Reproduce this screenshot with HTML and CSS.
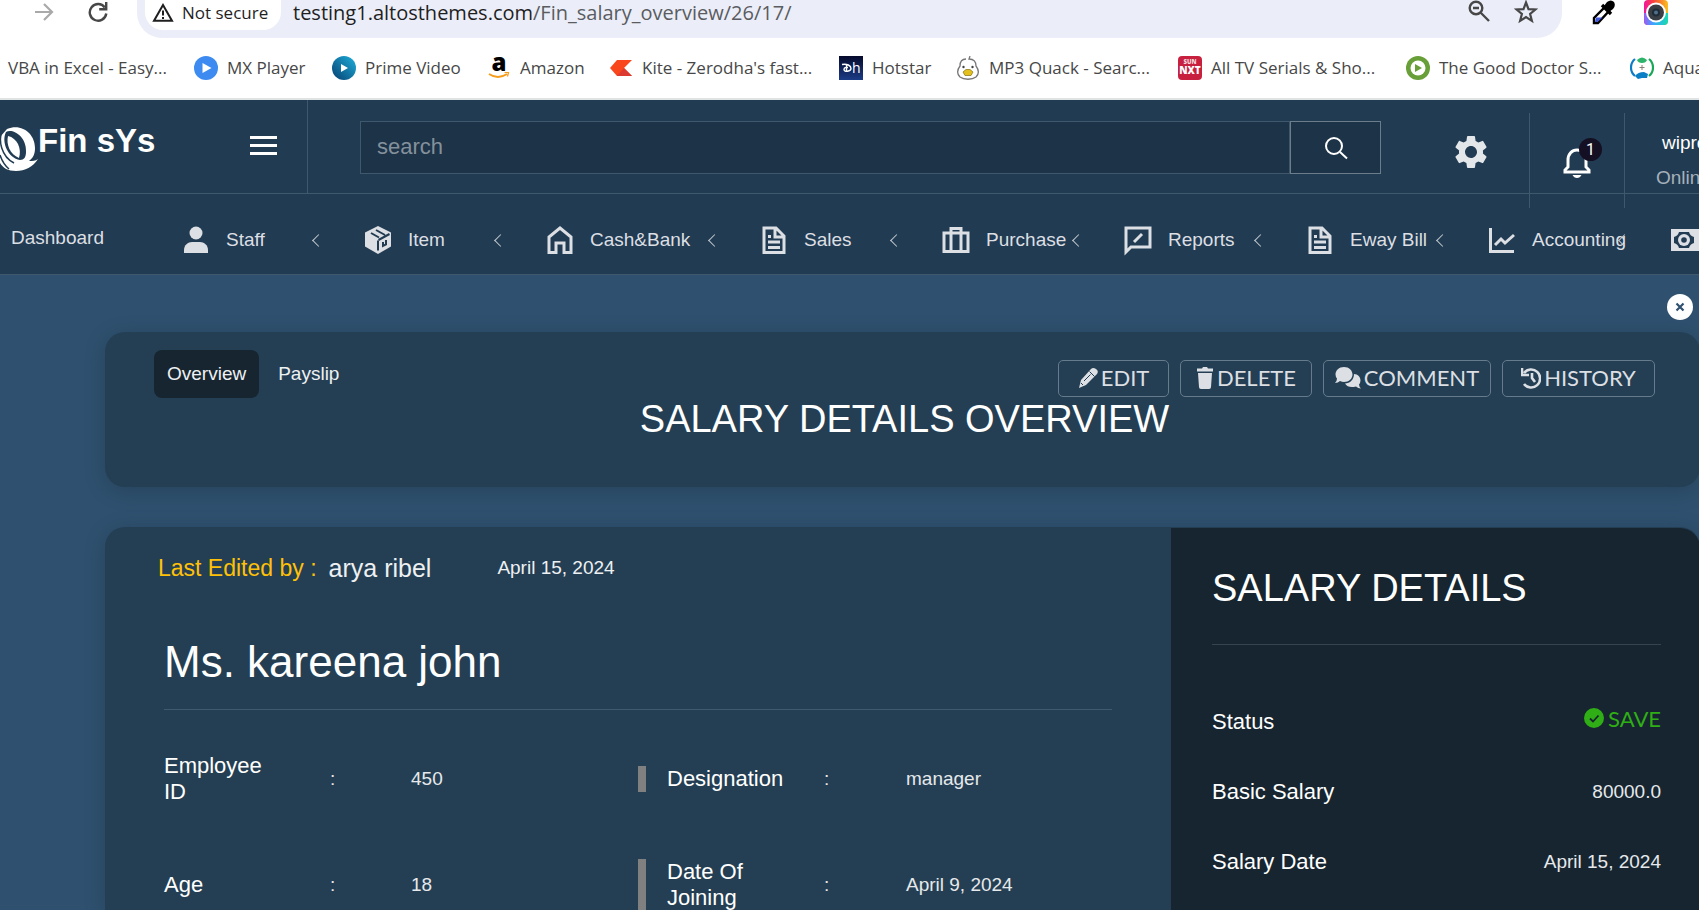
FILE: index.html
```html
<!DOCTYPE html>
<html lang="en">
<head>
<meta charset="utf-8">
<title>Salary Details Overview</title>
<link rel="stylesheet" href="styles.css">
</head>
<body>
<div class="browser">
  <div class="toolbar">
    <button class="tool forward" aria-label="Forward"><svg width="20" height="20" viewBox="0 0 20 20" fill="none" stroke="#a9a9a9" stroke-width="2.2"><path d="M1 10h16M10 2l8 8-8 8"/></svg></button>
    <button class="tool" aria-label="Reload"><svg width="20" height="20" viewBox="0 0 20 20" fill="none" stroke="#474747" stroke-width="2.4"><path d="M16.800 5.500A8.300 8.300 0 1 0 18.300 11.500"/><path d="M18.200 0v7.200h-7" /></svg></button>
    <div class="omnibox">
      <span class="chip"><svg width="22" height="19" viewBox="0 0 22 19" fill="none" stroke="#1f1f1f" stroke-width="2"><path d="M11 2L2 17.800h18z"/><path d="M11 7.500v5M11 14v2"/></svg>Not secure</span>
      <span class="url">testing1.altosthemes.com<span class="path">/Fin_salary_overview/26/17/</span></span>
      <button class="tool" aria-label="Zoom"><svg width="22" height="22" viewBox="0 0 22 22" fill="none" stroke="#474747" stroke-width="2.400"><circle cx="8" cy="8" r="6.300"/><path d="M12.500 12.500l8.500 8.500M5 8h6"/></svg></button>
      <button class="tool" aria-label="Bookmark"><svg width="24" height="24" viewBox="0 0 24 24" fill="none" stroke="#474747" stroke-width="2.200"><path d="M12 2.500l2.500 6.600 7 .4-5.400 4.500 1.800 6.900-5.900-3.800-5.900 3.800 1.800-6.900L2.500 9.500l7-.4z"/></svg></button>
    </div>
    <svg width="24" height="26" viewBox="0 0 24 26"><path d="M3 23v-5L14 7l4 4L7 23z" fill="#fff" stroke="#000" stroke-width="2.400"/><path d="M5 17.500h6.500L6.500 22H4z" fill="#4157d8"/><path d="M11 5l9 9" stroke="#000" stroke-width="3.400"/><path d="M13 6l3-4q4-3 7 0 2 4-1 7l-4 3z"/></svg>
    <svg class="camera" width="24" height="25" viewBox="0 0 24 25"><defs><linearGradient id="rb" x1="0" y1="0" x2="1" y2="0"><stop offset="0" stop-color="#f213a0"/><stop offset=".4" stop-color="#f8453a"/><stop offset="1" stop-color="#f9c01e"/></linearGradient><linearGradient id="rb2" x1="0" y1="0" x2="1" y2="0"><stop offset="0" stop-color="#9a5cf0"/><stop offset=".4" stop-color="#3ba6ff"/><stop offset="1" stop-color="#17dcb0"/></linearGradient></defs><rect width="24" height="25" rx="4" fill="url(#rb)"/><path d="M0 13h24v8q0 4-4 4H4q-4 0-4-4z" fill="url(#rb2)"/><circle cx="12" cy="12.500" r="10" fill="#fff"/><circle cx="12" cy="12.500" r="8" fill="#3a3f45"/><circle cx="12" cy="12.500" r="4" fill="#1f2c38"/><circle cx="12" cy="12.500" r="2" fill="#50708a"/></svg>
  </div>
  <nav class="bookmarks" aria-label="Bookmarks">
    <a href="#">VBA in Excel - Easy...</a>
    <a href="#"><svg width="24" height="24" viewBox="0 0 24 24"><circle cx="12" cy="12" r="12" fill="#3d8bf0"/><path d="M8.500 7l9 5-9 5z" fill="#fff"/></svg>MX Player</a>
    <a href="#"><svg width="24" height="24" viewBox="0 0 24 24"><defs><linearGradient id="pv" x1="1" y1="0" x2="0" y2="1"><stop offset="0" stop-color="#1fb0dc"/><stop offset="1" stop-color="#053f70"/></linearGradient></defs><circle cx="12" cy="12" r="12" fill="url(#pv)"/><path d="M9 8l7 4-7 4z" fill="#fff"/></svg>Prime Video</a>
    <a href="#"><svg width="24" height="24" viewBox="0 0 24 24"><text x="4.500" y="15" font-family="Open Sans" font-weight="800" font-size="24">a</text><path d="M2 18q9 6 18 0" fill="none" stroke="#f59c1a" stroke-width="2"/><path d="M17.500 16.500h4l-1 4" fill="none" stroke="#f59c1a" stroke-width="1.200"/></svg>Amazon</a>
    <a href="#"><svg width="24" height="24" viewBox="0 0 24 24"><path d="M8 4h15l-8 8 8 8H8l-7-8z" fill="#f9461c"/><path d="M15 12l8 8H8z" fill="#dc3a31"/></svg>Kite - Zerodha's fast...</a>
    <a href="#"><svg width="24" height="24" viewBox="0 0 24 24"><defs><linearGradient id="hs" x1="0" y1="0" x2="0" y2="1"><stop offset="0" stop-color="#060a2c"/><stop offset="1" stop-color="#1b3c86"/></linearGradient></defs><rect width="24" height="24" fill="url(#hs)"/><path d="M3 8.500c5-1 9 1 9 4s-7 4-7 1 4-2 4-2M7.500 9v7" fill="none" stroke="#fff" stroke-width="1.400"/><text x="13" y="17" font-family="Open Sans" font-size="14" fill="#fff">h</text></svg>Hotstar</a>
    <a href="#"><svg width="24" height="24" viewBox="0 0 24 24"><path d="M10 3c-5 0-6 4-6 7-3 4-3 8 0 11 4 3 12 3 16 0 3-3 3-7 0-11 0-4-2-7-7-7l1-3" fill="#fff" stroke="#777" stroke-width="1.300"/><circle cx="7.500" cy="11" r="1.200" fill="#444"/><circle cx="16.500" cy="11" r="1.200" fill="#444"/><path d="M7 16l3-2.500h4l3 2.500-2 3.500H9z" fill="#e3c01d" stroke="#85710f" stroke-width=".7"/></svg>MP3 Quack - Searc...</a>
    <a href="#"><svg width="24" height="24" viewBox="0 0 24 24"><rect width="24" height="24" rx="4" fill="#c8203f"/><text x="12" y="8" text-anchor="middle" font-family="Open Sans" font-weight="800" font-size="6" fill="#f4d5da">SUN</text><text x="12" y="18" text-anchor="middle" font-family="Open Sans" font-weight="800" font-size="10" fill="#fff">NXT</text></svg>All TV Serials &amp; Sho...</a>
    <a href="#"><svg width="24" height="24" viewBox="0 0 24 24"><circle cx="12" cy="12" r="12" fill="#689f38"/><circle cx="12" cy="12" r="7.500" fill="#fff"/><path d="M9 8l7 4-7 4z" fill="#689f38"/></svg>The Good Doctor S...</a>
    <a href="#"><svg width="24" height="24" viewBox="0 0 24 24" fill="none"><path d="M5 3a11 11 0 0 0 0 17" stroke="#0b7cc8" stroke-width="2.200"/><path d="M19 3a11 11 0 0 1 0 17" stroke="#18a758" stroke-width="2.200"/><path d="M7 4q5-5 10 0-1 3-5 3T7 4z" fill="#2db36a"/><path d="M5 20q3-4 9-4l4 2-1 4h-5l-4 1z" fill="#0a7fc6"/><path d="M12 9v5M9.500 11.500h5" stroke="#8a7f78"/></svg>Aqua</a>
  </nav>
</div>

<header class="header">
  <div class="brand">
    <svg class="logo" width="38" height="46" viewBox="0 0 38 46"><path d="M7 4C22-2 35 9 35 23c0 6-2 10-6 13 4 0 6 0 9-2-5 8-13 12-22 12C8 46 3 43 0 38V12z" fill="#fff"/><path d="M6 7C12 3 27 11 26 27c0 5-2 8-6 8C8 33 1 17 6 7z" fill="#213b52"/><path d="M8 11c9 2 14 12 11 22C10 29 6 20 8 11z" fill="#fff"/><path d="M3 2C-3 16 2 32 14 38M0 30q3 9 9 14" fill="none" stroke="#213b52" stroke-width="1.500"/><path d="M0 12q0-6 3-12H0z" fill="#213b52"/></svg>
    <span class="brand-name">Fin sYs</span>
    <button class="menu" aria-label="Toggle menu"><i></i><i></i><i></i></button>
  </div>
  <form class="search">
    <input type="text" placeholder="search" aria-label="search">
    <button type="button" aria-label="Submit search"><svg width="24" height="24" viewBox="0 0 24 24" fill="none" stroke="#fff" stroke-width="2"><circle cx="10" cy="10" r="8"/><path d="M16 16l7 6.500"/></svg></button>
  </form>
  <button class="gear" aria-label="Settings"><svg width="40" height="40" viewBox="0 0 24 24" fill="#e3e7ea"><path d="M19.140 12.940c.04-.3.060-.61.060-.94 0-.32-.02-.64-.07-.94l2.030-1.580a.49.49 0 0 0 .12-.61l-1.920-3.320a.488.488 0 0 0-.59-.22l-2.390.96c-.5-.38-1.030-.7-1.620-.94l-.36-2.540a.484.484 0 0 0-.48-.41h-3.840c-.24 0-.43.17-.47.41l-.36 2.540c-.59.24-1.130.57-1.620.94l-2.390-.96c-.22-.08-.47 0-.59.220L2.740 8.870c-.12.21-.08.47.12.61l2.030 1.580c-.05.3-.09.63-.09.94s.02.64.07.94l-2.030 1.580a.49.49 0 0 0-.12.610l1.920 3.320c.12.22.37.29.59.22l2.390-.96c.5.38 1.030.7 1.620.94l.36 2.540c.05.24.24.41.48.41h3.840c.24 0 .44-.17.47-.41l.36-2.540c.59-.24 1.130-.56 1.620-.94l2.390.96c.22.08.47 0 .59-.22l1.920-3.320c.12-.22.07-.47-.12-.61l-2.010-1.580zM12 15.600A3.610 3.610 0 0 1 8.400 12c0-1.980 1.620-3.600 3.600-3.600s3.600 1.620 3.600 3.600-1.620 3.600-3.600 3.600z"/></svg></button>
  <div class="alerts">
    <button class="bell" aria-label="Notifications"><svg width="28" height="30" viewBox="0 0 28 30" fill="none" stroke="#fff"><path d="M2 24v-2l3-3v-7c0-6 4-10 9-10s9 4 9 10v7l3 3v2z" stroke-width="3"/><path d="M9.500 27h9q-1.500 3-4.500 3t-4.500-3z" fill="#fff" stroke="none"/></svg><span class="badge">1</span></button>
  </div>
  <div class="user"><strong>wipro</strong><span>Online</span></div>
</header>

<nav class="mainnav" aria-label="Main">
  <a class="dash" href="#">Dashboard</a>
  <a class="item" href="#"><svg viewBox="0 0 28 28"><circle cx="14" cy="7" r="6.500"/><path d="M2 27v-3c0-5 4-8 8-8h8c4 0 8 3 8 8v3z"/></svg>Staff<i></i></a>
  <a class="item" href="#"><svg viewBox="0 0 28 28"><path d="M14 0l13 6.500v14L14 28 1 20.500v-14z"/><path class="cut" d="M14 14.500v10M14.500 14l11-6M7 7l8 4.500M12 4l9 5M19 16v4l3-1.500V14"/></svg>Item<i></i></a>
  <a class="item wide" href="#"><svg class="line" viewBox="0 0 28 28"><path d="M3 26.500V11L14 2l11 9v15.500h-7V17h-8v9.500z"/></svg>Cash&amp;Bank<i></i></a>
  <a class="item" href="#"><svg class="line" viewBox="0 0 28 28"><path d="M4 2h12l8 8v16.500H4zM15 2v9h9M8 16h12M8 21.500h12M8 10.500h3"/></svg>Sales<i></i></a>
  <a class="item" href="#"><svg class="line" viewBox="0 0 28 28"><path d="M2 7h24v18.500H2zM9 25V2.500h10V25"/></svg>Purchase<i></i></a>
  <a class="item" href="#"><svg class="line" viewBox="0 0 28 28"><path d="M2 2h24v19H7l-5 5z"/><path d="M10 16l8-8"/></svg>Reports<i></i></a>
  <a class="item" href="#"><svg class="line" viewBox="0 0 28 28"><path d="M4 2h12l8 8v16.500H4zM15 2v9h9M8 16h12M8 21.500h12M8 10.500h3"/></svg>Eway Bill<i></i></a>
  <a class="item" href="#"><svg class="line" viewBox="0 0 28 28"><path d="M2.500 2v23.500H26M7 19l6-6 4 4 9-8"/></svg>Accounting<i></i></a>
  <a class="item" href="#"><svg viewBox="0 0 28 28"><path d="M1 3h30v22H1z"/><path class="hole" d="M9 6h10q1 4 5 5v6q-4 1-5 5H9q-1-4-5-5v-6q4-1 5-5z"/><circle cx="14" cy="14" r="6"/><circle class="hole" cx="14" cy="14" r="2.800"/></svg></a>
</nav>

<main class="main">
  <button class="close" aria-label="Close"><svg width="12" height="12" viewBox="0 0 12 12" stroke="#2f516f" stroke-width="2.200"><path d="M2.500 2.500l7 7M9.500 2.500l-7 7"/></svg></button>
  <section class="card top">
    <div class="bar">
      <div class="tabs"><button class="tab active">Overview</button><button class="tab">Payslip</button></div>
      <div class="actions">
        <button><svg width="20" height="22" viewBox="0 0 20 22"><path d="M1 21l2-8L13 2q2-2 5 0t1 5L8 18z"/><path class="cut thin" d="M11.500 4.500l5 5M6 14l6.500-6.500M3 16l2 2"/></svg>EDIT</button>
        <button><svg width="18" height="22" viewBox="0 0 18 22"><path d="M1 1.500h5L7 0h4l1 1.500h5v3H1zM2 6h14l-1 14q0 2-2 2H5q-2 0-2-2z"/></svg>DELETE</button>
        <button><svg width="26" height="22" viewBox="0 0 26 22"><path d="M9 0c5 0 8.500 3.500 8.500 7.500S14 15 9 15q-2 0-4-1-2 2-5 2 2-2 2-4.500Q.5 9.500.5 7.500C.5 3.500 4 0 9 0z"/><path d="M19 7c4 0 6.500 3 6.500 6.500q0 2-1.500 4 0 2 2 4-3 0-5-2-8 2-11-3c5 0 9-4 9-9.500z"/></svg>COMMENT</button>
        <button><svg class="line" width="20" height="22" viewBox="0 0 20 22"><path d="M3 6a9 9 0 1 1 0 11M1 1v7h7M11 6v5l3 4"/></svg>HISTORY</button>
      </div>
    </div>
    <h1>SALARY DETAILS OVERVIEW</h1>
  </section>

  <section class="card detail">
    <div class="person">
      <div class="edited"><span class="by">Last Edited by :</span><span class="who">arya ribel</span><time>April 15, 2024</time></div>
      <div class="info">
        <h2>Ms. kareena john</h2>
        <hr>
        <div class="row">
          <dl class="pair"><dt>Employee ID</dt><dd>:</dd><dd>450</dd></dl>
          <dl class="pair right"><dt>Designation</dt><dd>:</dd><dd>manager</dd></dl>
        </div>
        <div class="row">
          <dl class="pair"><dt>Age</dt><dd>:</dd><dd>18</dd></dl>
          <dl class="pair right"><dt>Date Of Joining</dt><dd>:</dd><dd>April 9, 2024</dd></dl>
        </div>
      </div>
    </div>
    <aside class="salary">
      <h2>SALARY DETAILS</h2>
      <hr>
      <div class="line-item"><span>Status</span><b class="save"><svg width="20" height="20" viewBox="0 0 20 20"><circle cx="10" cy="10" r="10" fill="#2fae15"/><path d="M6 10.500l3 3 5.500-6" fill="none" stroke="#162530" stroke-width="1.800"/></svg>SAVE</b></div>
      <div class="line-item"><span>Basic Salary</span><em>80000.0</em></div>
      <div class="line-item"><span>Salary Date</span><em>April 15, 2024</em></div>
    </aside>
  </section>
</main>
</body>
</html>
```
FILE: styles.css
```css
* { box-sizing: border-box; }
body {
  margin: 0;
  height: 100vh;
  overflow: hidden;
  display: flex;
  flex-direction: column;
  background: #2f516f;
  color: #fff;
  font-family: "Liberation Sans", Arial, sans-serif;
  font-size: 19px;
}
button { font: inherit; color: inherit; background: none; border: 0; padding: 0; }
a { color: inherit; text-decoration: none; }
svg { flex: none; display: block; }
h1, h2, dl, dt, dd { margin: 0; font-weight: 400; }
hr { margin: 0; border: 0; border-top: 1px solid #3f5a70; }

/* browser chrome */
.browser {
  flex: none;
  height: 100px;
  background: #fff;
  border-bottom: 2px solid #dfe3e3;
  font-family: "Open Sans", sans-serif;
  overflow: hidden;
}
.toolbar { display: flex; align-items: flex-start; height: 38px; padding-left: 34px; gap: 29px; }
.toolbar > .tool { padding-top: 2px; }
.toolbar > .forward { margin-right: 5px; }
.omnibox {
  flex: 1;
  display: flex;
  align-items: flex-start;
  height: 38px;
  padding: 0 24px 0 8px;
  border-radius: 0 0 25px 25px;
  background: #ebeef8;
  color: #1f1f1f;
}
.chip {
  display: flex;
  align-items: center;
  gap: 8px;
  width: 136px;
  height: 30px;
  padding: 0 0 5px 7px;
  border-radius: 0 0 18px 18px;
  background: #fff;
  font-size: 17px;
  font-weight: 500;
  white-space: nowrap;
}
.url { flex: 1; padding-left: 12px; font-size: 20px; line-height: 25px; }
.path { color: #5a5c61; }
.omnibox .tool { margin-left: 24px; }
.camera { margin: 0 44px 0 0; }
.toolbar { padding-right: 0; margin-right: -13px; }
.bookmarks {
  display: grid;
  grid-template-columns: 186px 138px 155px 122px 230px 117px 222px 228px 224px 100px;
  padding: 18px 0 0 8px;
  color: #474747;
  font-size: 17px;
  line-height: 24px;
  white-space: nowrap;
}
.bookmarks a { display: flex; gap: 9px; }

/* header */
.header { flex: none; display: flex; height: 94px; background: #213b52; border-bottom: 1px solid #40586c; }
.brand { display: flex; width: 308px; border-right: 1px solid #40586c; }
.logo { margin-top: 25px; }
.brand-name { flex: 1; padding-top: 23px; font-size: 33px; line-height: 36px; font-weight: 700; }
.menu { display: flex; flex-direction: column; gap: 5px; margin: 36px 30px 0 0; height: 20px; }
.menu i { width: 27px; height: 3px; background: #fff; }
.search { flex: 1; display: flex; margin: 21px 0 0 52px; height: 53px; }
.search input {
  flex: 1;
  min-width: 0;
  padding: 0 16px 2px;
  border: 1px solid #40586c;
  background: #1d3347;
  color: #fff;
  font: inherit;
  font-size: 22px;
  border-radius: 0;
}
.search input::placeholder { color: #84919c; opacity: 1; }
.search button { width: 91px; border: 1px solid #6b7d8b; background: #1d3347; display: grid; place-items: center; }
.gear { width: 148px; padding: 10px 0 0 32px; display: grid; place-items: center; }
.alerts { width: 96px; margin: 13px 0 -15px; border: solid #40586c; border-width: 0 1px; display: grid; place-items: center; z-index: 1; }
.bell { position: relative; padding-top: 4px; }
.badge {
  position: absolute;
  top: -6px;
  left: 16px;
  width: 23px;
  height: 23px;
  border-radius: 50%;
  background: #140f22;
  color: #fff;
  font: 16px/23px Roboto, sans-serif;
}
.user { width: 74px; padding: 31px 0 0 31px; overflow: hidden; white-space: nowrap; font-size: 19px; }
.user strong { display: block; padding-left: 6px; line-height: 24px; font-weight: 400; }
.user span { display: block; margin-top: 11px; line-height: 24px; color: #a6b1ba; }

/* navigation */
.mainnav {
  flex: none;
  display: flex;
  height: 81px;
  gap: 45px;
  padding-left: 11px;
  overflow: hidden;
  background: #213b52;
  border-bottom: 1px solid #40586c;
  color: #dcdfe3;
  line-height: 22px;
  white-space: nowrap;
}
.dash { flex: none; width: 126px; padding-top: 33px; }
.item { position: relative; flex: none; display: flex; align-items: center; gap: 16px; width: 137px; height: 92px; }
.item.wide { width: 169px; }
.item svg { width: 28px; height: 28px; fill: #dcdfe3; overflow: visible; }
.item svg.line { fill: none; stroke: #dcdfe3; stroke-width: 3; }
.item svg .cut, .cut { fill: none; stroke: #213b52; stroke-width: 2; }
.item svg .hole { fill: #213b52; }
.actions .thin { stroke-width: 1; }
.item i {
  position: absolute;
  right: -4px;
  top: 42px;
  width: 9px;
  height: 9px;
  border: solid #c4cad0;
  border-width: 0 0 1px 1px;
  transform: rotate(45deg);
}

/* content */
.main { flex: 1; min-height: 0; display: flex; flex-direction: column; margin-right: -1px; padding-left: 105px; }
.close { align-self: flex-end; flex: none; width: 26px; height: 26px; margin: 19px 7px 12px 0; border-radius: 50%; background: #fff; display: grid; place-items: center; }
.card { background: #243f54; border-radius: 20px; box-shadow: 0 4px 20px rgba(20, 35, 50, .3); }
.top { flex: none; height: 155px; padding: 18px 45px 0 49px; }
.bar { display: flex; justify-content: space-between; height: 48px; }
.tabs { display: flex; gap: 6px; }
.tab { padding: 0 13px; border-radius: 8px; color: #eef0f2; }
.tab.active { background: #162530; }
.actions {
  display: grid;
  grid-template-columns: 111px 132px 168px 153px;
  gap: 11px;
  height: 37px;
  margin-top: 10px;
  font-family: Lato, sans-serif;
  font-size: 22px;
  color: #dcdfe3;
}
.actions button { display: flex; align-items: center; justify-content: center; gap: 3px; padding-bottom: 2px; border: 1px solid #667b8b; border-radius: 5px; }
.actions svg { fill: #dcdfe3; }
.actions svg.line { fill: none; stroke: #dcdfe3; stroke-width: 2.600; }
.top h1 { font-size: 38px; line-height: 42px; text-align: center; }
.detail { flex: 1; display: flex; margin-top: 40px; min-height: 0; border-radius: 20px 20px 0 0; }
.person { flex: 1; padding: 26px 59px 0 53px; }
.edited { display: flex; align-items: center; color: #eef0f2; line-height: 30px; }
.by { color: #ffc107; font-size: 23px; }
.who { padding-left: 12px; font-size: 25px; }
.edited time { padding-left: 66px; }
.info { padding-left: 6px; }
.info h2 { padding: 54px 0 23px; font-size: 44px; line-height: 49px; }
.row { display: grid; grid-template-columns: 1fr 1fr; margin: 43px 0 54px; height: 52px; }
.row + .row { margin-top: 0; }
.pair { display: grid; grid-template-columns: 166px 81px 1fr; align-items: center; align-content: center; color: #e6e9eb; }
.pair dt { color: #fff; font-size: 22px; line-height: 26px; padding-right: 47px; }
.pair.right { grid-template-columns: 186px 82px 1fr; }
.pair.right dt { padding: 0 36px 0 21px; border-left: 8px solid #808080; }
.salary { width: 529px; margin-top: 1px; padding: 37px 39px 0 41px; border-radius: 0 20px 0 0; background: #162530; }
.salary h2 { padding-bottom: 33px; font-size: 38px; line-height: 46px; }
.salary hr { border-color: #35444f; margin-bottom: 60px; }
.line-item { display: flex; justify-content: space-between; align-items: center; height: 34px; margin-bottom: 36px; font-size: 22px; }
.line-item em { font-style: normal; font-size: 19px; color: #e6e9eb; }
.save { display: flex; align-items: center; gap: 4px; padding-bottom: 8px; color: #2fae15; font-family: Lato, sans-serif; font-weight: 400; }
```
